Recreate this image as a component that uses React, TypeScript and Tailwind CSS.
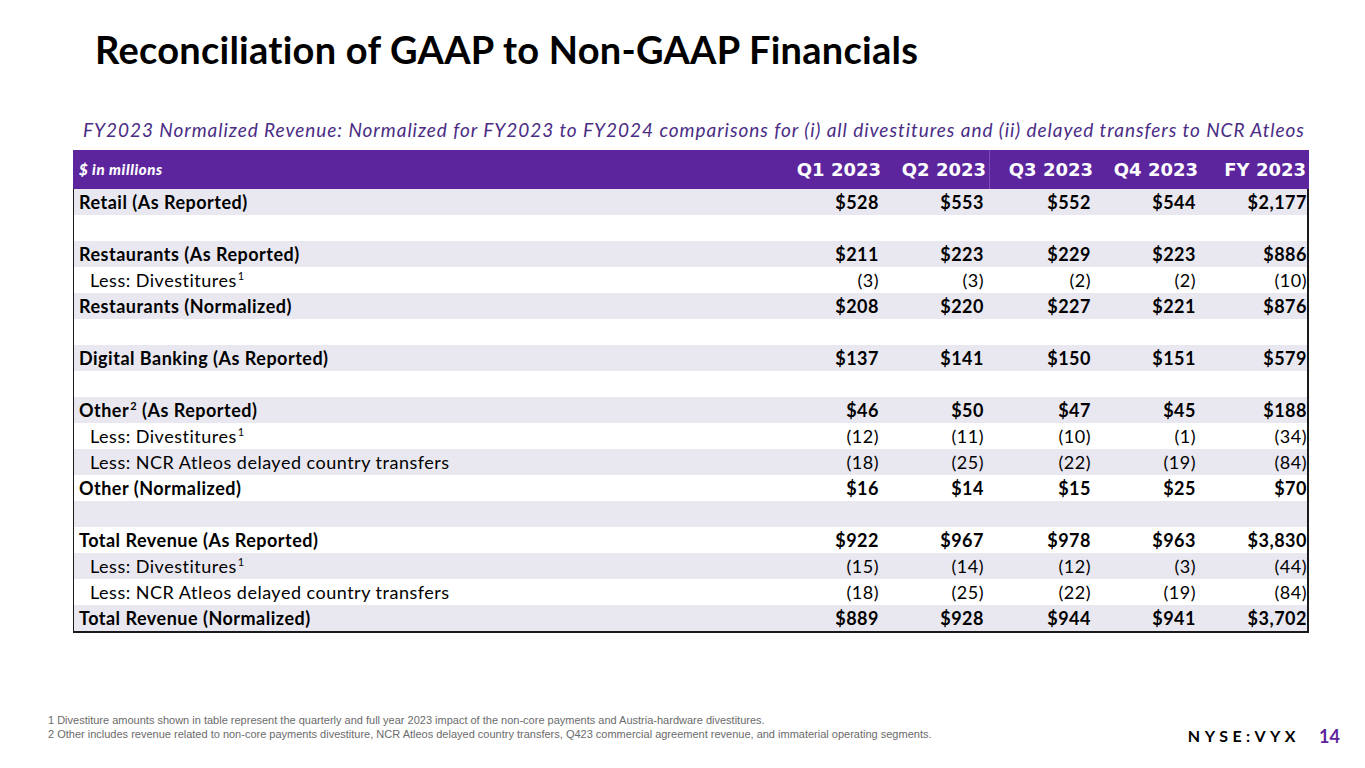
type Row = {
  label: string;
  sup?: string;
  suffix?: string;
  bold?: boolean;
  indent?: boolean;
  values?: string[];
};

const rows: Row[] = [
  { label: "Retail (As Reported)", bold: true, values: ["$528", "$553", "$552", "$544", "$2,177"] },
  { label: "" },
  { label: "Restaurants (As Reported)", bold: true, values: ["$211", "$223", "$229", "$223", "$886"] },
  { label: "Less: Divestitures", sup: "1", indent: true, values: ["(3)", "(3)", "(2)", "(2)", "(10)"] },
  { label: "Restaurants (Normalized)", bold: true, values: ["$208", "$220", "$227", "$221", "$876"] },
  { label: "" },
  { label: "Digital Banking (As Reported)", bold: true, values: ["$137", "$141", "$150", "$151", "$579"] },
  { label: "" },
  { label: "Other", sup: "2", suffix: " (As Reported)", bold: true, values: ["$46", "$50", "$47", "$45", "$188"] },
  { label: "Less: Divestitures", sup: "1", indent: true, values: ["(12)", "(11)", "(10)", "(1)", "(34)"] },
  { label: "Less: NCR Atleos delayed country transfers", indent: true, values: ["(18)", "(25)", "(22)", "(19)", "(84)"] },
  { label: "Other (Normalized)", bold: true, values: ["$16", "$14", "$15", "$25", "$70"] },
  { label: "" },
  { label: "Total Revenue (As Reported)", bold: true, values: ["$922", "$967", "$978", "$963", "$3,830"] },
  { label: "Less: Divestitures", sup: "1", indent: true, values: ["(15)", "(14)", "(12)", "(3)", "(44)"] },
  { label: "Less: NCR Atleos delayed country transfers", indent: true, values: ["(18)", "(25)", "(22)", "(19)", "(84)"] },
  { label: "Total Revenue (Normalized)", bold: true, values: ["$889", "$928", "$944", "$941", "$3,702"] },
];

const headers = ["Q1 2023", "Q2 2023", "Q3 2023", "Q4 2023", "FY 2023"];

const grid = "grid grid-cols-[1fr_105px_105px_107px_105px_108px]";

function Label({ row }: { row: Row }) {
  return (
    <span>
      {row.label}
      {row.sup && <sup className="text-[11px] relative -top-[7px] ml-[1px]">{row.sup}</sup>}
      {row.suffix}
    </span>
  );
}

export default function App() {
  return (
    <div
      className="w-[1365px] h-[768px] bg-white overflow-hidden flex flex-col"
      style={{ fontFamily: "Lato, 'Open Sans', sans-serif" }}
    >
      <h1 className="ml-[95px] mt-[30px] text-[38px] font-bold text-black tracking-[0.25px] leading-none">
        Reconciliation of GAAP to Non-GAAP Financials
      </h1>

      <div className="ml-[83px] mt-[52px] text-[19px] italic text-[#4a2c85] leading-none tracking-[0.95px] whitespace-nowrap">
        FY2023 Normalized Revenue: Normalized for FY2023 to FY2024 comparisons for (i) all divestitures and (ii) delayed transfers to NCR Atleos
      </div>

      <div className="ml-[73px] mt-[11px] w-[1236px]">
        <div className={`${grid} h-[39px] bg-[#5c259e] text-white items-center`}>
          <div className="pl-[6px] text-[15px] font-black italic tracking-[0.6px]">$ in millions</div>
          {headers.map((h, i) => (
            <div
              key={h}
              className={`h-full flex items-center justify-end pr-[3px] text-[18px] font-bold ${i === 2 ? "border-l border-[#7a4cb5]" : ""}`}
              style={{ fontFamily: "'DejaVu Sans', Lato, sans-serif" }}
            >
              {h}
            </div>
          ))}
        </div>
        <div className="border-l-[1.5px] border-r-2 border-b-2 border-[#1a1a1a]">
          {rows.map((row, i) => (
            <div
              key={i}
              className={`${grid} h-[26px] items-center text-[18px] tracking-[0.5px] text-black ${i % 2 === 0 ? "bg-[#e9e8f1]" : "bg-white"} ${row.bold ? "font-bold" : "font-normal"}`}
            >
              <div className={row.indent ? "pl-[16px]" : "pl-[5px]"}>
                <Label row={row} />
              </div>
              {row.values?.map((v, j) => (
                <div key={j} className={`text-right ${j === 4 ? "pr-0" : "pr-[3px]"}`}>
                  {v}
                </div>
              ))}
            </div>
          ))}
        </div>
      </div>

      <div className="mt-auto pb-[23px] flex items-end justify-between">
        <div
          className="ml-[48px] mb-[4px] text-[11px] text-[#6b6b6b] leading-[14px]"
          style={{ fontFamily: "'Liberation Sans', Arial, sans-serif" }}
        >
          <div>1 Divestiture amounts shown in table represent the quarterly and full year 2023 impact of the non-core payments and Austria-hardware divestitures.</div>
          <div>2 Other includes revenue related to non-core payments divestiture, NCR Atleos delayed country transfers, Q423 commercial agreement revenue, and immaterial operating segments.</div>
        </div>
        <div className="mr-[25px] flex items-center gap-[19px] leading-none">
          <span className="text-[16px] font-bold tracking-[4.5px] text-black">NYSE:VYX</span>
          <span className="text-[18px] font-bold text-[#5c259e]">14</span>
        </div>
      </div>
    </div>
  );
}
